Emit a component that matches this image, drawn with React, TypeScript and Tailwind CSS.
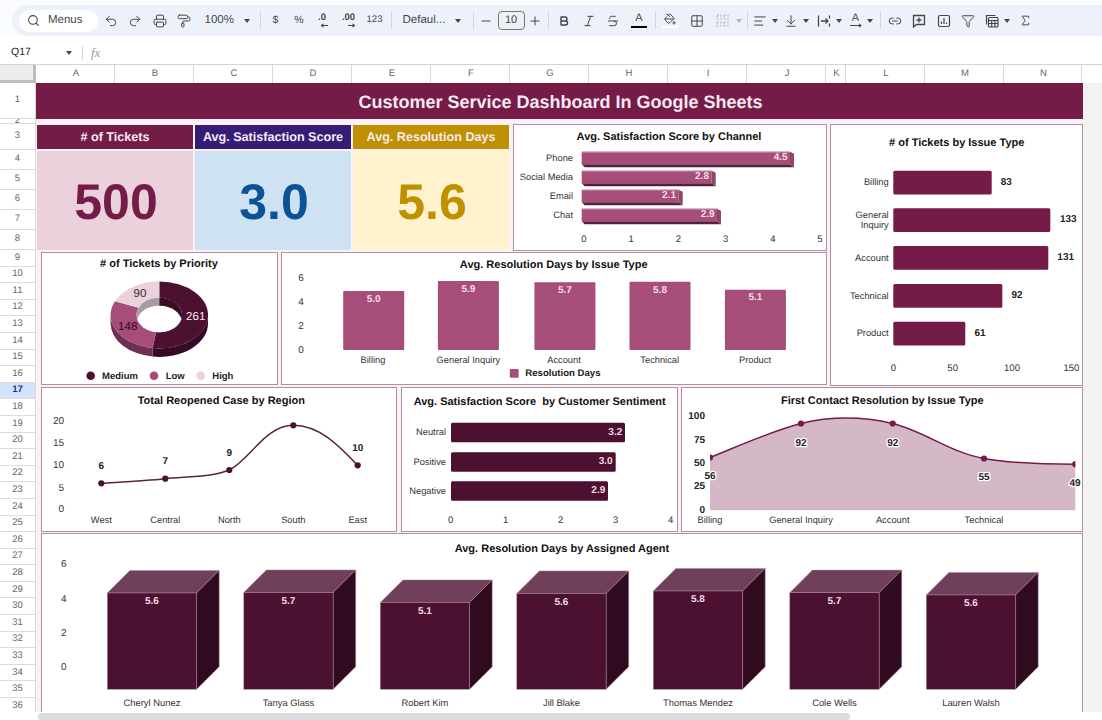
import type { ReactNode } from 'react';
import {
  AlignLeft,
  ArrowDownToLine,
  Bold,
  Filter,
  Grid2x2,
  Italic,
  Link2,
  Minus,
  PaintBucket,
  PaintRoller,
  Plus,
  Printer,
  Redo2,
  Search,
  Sigma,
  Strikethrough,
  Undo2,
} from 'lucide-react';

const PLUM = '#741b47';
const DARK = '#4c1130';
const MAUVE = '#a64d79';
const PALE = '#ead1dc';

const COLUMNS = [
  { name: 'A', cls: 'w-[79px]' },
  { name: 'B', cls: 'w-[79px]' },
  { name: 'C', cls: 'w-[79px]' },
  { name: 'D', cls: 'w-[79px]' },
  { name: 'E', cls: 'w-[79px]' },
  { name: 'F', cls: 'w-[79px]' },
  { name: 'G', cls: 'w-[79px]' },
  { name: 'H', cls: 'w-[79px]' },
  { name: 'I', cls: 'w-[79px]' },
  { name: 'J', cls: 'w-[79px]' },
  { name: 'K', cls: 'w-[20px]' },
  { name: 'L', cls: 'w-[79px]' },
  { name: 'M', cls: 'w-[79px]' },
  { name: 'N', cls: 'w-[78px]' },
];

const ROW_NUMBERS = Array.from({ length: 28 }, (_, i) => i + 9);

function Cell({ className, children }: { className: string; children?: ReactNode }) {
  return <div className={`flex shrink-0 items-center justify-center ${className}`}>{children}</div>;
}

function Caret({ className = '' }: { className?: string }) {
  return (
    <Cell className={`w-2 ${className}`}>
      <span className="block h-0 w-0 border-x-[3.5px] border-t-[4px] border-x-transparent border-t-[#444746]" />
    </Cell>
  );
}

function Divider({ className }: { className: string }) {
  return <div className={`h-[17px] w-px shrink-0 bg-[#d3d6da] ${className}`} />;
}

function DecimalIcon({ label, more }: { label: string; more?: boolean }) {
  return (
    <div className="flex h-[16px] flex-col items-center">
      <span className="text-[9.5px] font-bold leading-[10px] text-[#444746]">{label}</span>
      <svg width="9" height="5" viewBox="0 0 9 5" className="ml-[5px]" fill="none" stroke="#444746" strokeWidth="1.1">
        {more ? <path d="M1 2.5h6.5M5.5 .8l2 1.7-2 1.7" /> : <path d="M8 2.5H1.5M3.5 .8l-2 1.7 2 1.7" />}
      </svg>
    </div>
  );
}

function Toolbar() {
  const ic = { size: 14, strokeWidth: 1.7, color: '#444746' };
  return (
    <div className="h-9 shrink-0 bg-[#f9fbfd] pt-[5px]">
      <div className="ml-3 flex h-[31px] items-center rounded-l-[16px] bg-[#edf2fa] pl-[7px] text-[11.5px] text-[#444746]">
        <div className="flex h-[22px] w-[79px] shrink-0 items-center gap-[8px] rounded-full bg-white pl-[8px]">
          <Search size={13} strokeWidth={2} color="#444746" />
          <span>Menus</span>
        </div>
        <Cell className="ml-px w-6"><Undo2 {...ic} /></Cell>
        <Cell className="w-6"><Redo2 {...ic} /></Cell>
        <Cell className="ml-px w-6"><Printer {...ic} /></Cell>
        <Cell className="w-[23px]"><PaintRoller {...ic} /></Cell>
        <span className="ml-[9.5px] w-[29px] shrink-0">100%</span>
        <Caret className="ml-[9px]" />
        <Divider className="ml-[9px]" />
        <Cell className="ml-[3px] w-6 text-[10.5px]">$</Cell>
        <Cell className="w-[23px] text-[10.5px]">%</Cell>
        <Cell className="w-[23px]"><DecimalIcon label=".0" /></Cell>
        <Cell className="w-[30px]"><DecimalIcon label=".00" more /></Cell>
        <Cell className="w-[22px] text-[9.5px]">123</Cell>
        <Divider className="ml-[5px]" />
        <span className="ml-[11px] w-[41px] shrink-0 whitespace-nowrap">Defaul...</span>
        <Caret className="ml-[10px]" />
        <Divider className="ml-[11px]" />
        <Cell className="ml-[2px] w-5"><Minus {...ic} /></Cell>
        <Cell className="ml-[2px] h-[19px] w-[27px] rounded-[4px] border border-[#747775] text-[11px]">10</Cell>
        <Cell className="w-5"><Plus {...ic} /></Cell>
        <Divider className="ml-[3px]" />
        <Cell className="ml-[3px] w-6"><Bold size={12} strokeWidth={2.8} color="#444746" /></Cell>
        <Cell className="w-[26px]"><Italic {...ic} /></Cell>
        <Cell className="w-[23px]"><Strikethrough {...ic} /></Cell>
        <Cell className="ml-[2px] w-[25px]">
          <div className="flex w-[16px] flex-col items-center">
            <span className="text-[11px] leading-[11px]">A</span>
            <span className="mt-[2px] h-[2.5px] w-[16px] bg-black" />
          </div>
        </Cell>
        <Divider className="ml-[3px]" />
        <Cell className="ml-[2px] w-6">
          <div className="flex w-[16px] flex-col items-center">
            <PaintBucket size={12} strokeWidth={2} color="#444746" />
            <span className="mt-px h-[2.5px] w-[16px] bg-white" />
          </div>
        </Cell>
        <Cell className="ml-[3px] w-6"><Grid2x2 {...ic} /></Cell>
        <Cell className="ml-[2px] w-6">
          <svg width="13" height="13" viewBox="0 0 13 13" fill="none" stroke="#b4b8bd" strokeWidth="1.2" strokeDasharray="2 1.4">
            <rect x="1" y="1" width="4" height="4" />
            <rect x="8" y="1" width="4" height="4" />
            <rect x="1" y="8" width="4" height="4" />
            <rect x="8" y="8" width="4" height="4" />
          </svg>
        </Cell>
        <Cell className="w-2">
          <span className="block h-0 w-0 border-x-[3.5px] border-t-[4px] border-x-transparent border-t-[#b4b8bd]" />
        </Cell>
        <Divider className="ml-[4px]" />
        <Cell className="ml-[2px] w-[21px]"><AlignLeft {...ic} /></Cell>
        <Caret />
        <Cell className="ml-[2px] w-[21px]"><ArrowDownToLine {...ic} /></Cell>
        <Caret />
        <Cell className="ml-[4px] w-[21px]">
          <svg width="14" height="14" viewBox="0 0 14 14" fill="none" stroke="#444746" strokeWidth="1.3">
            <path d="M1.5 1.5v11M12.5 1.5v3M12.5 9.5v3M4 7h7M8.5 4.5L11 7l-2.5 2.5" />
          </svg>
        </Cell>
        <Caret />
        <Cell className="ml-[3px] w-5">
          <div className="flex flex-col items-center">
            <span className="text-[11px] leading-[10px]">A</span>
            <svg width="14" height="5" viewBox="0 0 14 5" fill="none" stroke="#444746" strokeWidth="1.1">
              <path d="M1 2.5h11M10 .8l2 1.7-2 1.7" />
            </svg>
          </div>
        </Cell>
        <Caret />
        <Divider className="ml-[6px]" />
        <Cell className="ml-[2px] w-6"><Link2 {...ic} /></Cell>
        <Cell className="w-6">
          <svg width="14" height="14" viewBox="0 0 14 14" fill="none" stroke="#444746" strokeWidth="1.3">
            <path d="M1.5 1.5h11v9H4.5l-3 2.5zM7 3.5v5M4.5 6h5" />
          </svg>
        </Cell>
        <Cell className="ml-px w-6">
          <svg width="14" height="14" viewBox="0 0 14 14" fill="none" stroke="#444746" strokeWidth="1.2">
            <rect x="1.5" y="1.5" width="11" height="11" rx="1.5" />
            <path d="M4.5 10V7.5M7 10V4M9.5 10V8.5" />
          </svg>
        </Cell>
        <Cell className="w-6"><Filter {...ic} /></Cell>
        <Cell className="ml-px w-[22px]">
          <svg width="14" height="14" viewBox="0 0 14 14" fill="none" stroke="#444746" strokeWidth="1.2">
            <path d="M1.5 10.5V1.5h9" />
            <rect x="3.5" y="3.5" width="9.5" height="9.5" rx="1" />
            <path d="M3.5 6.5h9.5M3.5 9.5h9.5M6.7 6.5V13M9.9 6.5V13" />
          </svg>
        </Cell>
        <Caret />
        <Cell className="ml-[3px] w-6"><Sigma size={13} strokeWidth={1.8} color="#444746" /></Cell>
      </div>
    </div>
  );
}

function FormulaBar() {
  return (
    <div className="flex h-[29px] shrink-0 items-center border-b border-[#d3d3d3] bg-white pt-[6px]">
      <span className="ml-[11px] w-[54px] text-[10.5px] text-[#222]">Q17</span>
      <Caret />
      <div className="ml-[9px] h-[14px] w-px bg-[#d3d6da]" />
      <span className="ml-[8px] font-['Liberation_Serif',serif] text-[13px] italic text-[#9a9a9a]">fx</span>
    </div>
  );
}

function ColumnHeader() {
  return (
    <div className="flex h-[18px] shrink-0 bg-white text-[9.5px] text-[#666]">
      <div className="w-[36px] shrink-0 border-b-[3px] border-r-[3px] border-[#bdbdbd] bg-[#ececec]" />
      {COLUMNS.map((c) => (
        <div key={c.name} className={`flex shrink-0 items-center justify-center border-r border-[#d9d9d9] pl-[2px] ${c.cls}`}>
          {c.name}
        </div>
      ))}
    </div>
  );
}

function RowLabel({ n, className }: { n: number; className: string }) {
  return (
    <div className={`flex shrink-0 items-center justify-center overflow-hidden border-b border-[#dcdcdc] ${className}`}>
      {n}
    </div>
  );
}

function RowHeader() {
  return (
    <div className="flex w-[36px] shrink-0 flex-col overflow-hidden border-r border-[#d9d9d9] bg-white text-[9.5px] text-[#666]">
      <RowLabel n={1} className="h-9" />
      <RowLabel n={2} className="h-[5px]" />
      <RowLabel n={3} className="h-[26px]" />
      {[4, 5, 6, 7, 8].map((n) => (
        <RowLabel key={n} n={n} className="h-5" />
      ))}
      {ROW_NUMBERS.map((n) =>
        n === 17 ? (
          <RowLabel key={n} n={n} className="h-[16.6px] bg-[#d3e3fd] font-bold text-[#0b3d8f]" />
        ) : (
          <RowLabel key={n} n={n} className="h-[16.6px]" />
        ),
      )}
    </div>
  );
}

type TextProps = {
  x: number;
  y: number;
  children: ReactNode;
  anchor?: 'start' | 'middle' | 'end';
  bold?: boolean;
  size?: number;
  fill?: string;
  halo?: boolean;
};

function T({ x, y, children, anchor = 'middle', bold, size = 9.3, fill = '#333333', halo }: TextProps) {
  return (
    <text
      x={x}
      y={y + 0.5}
      textAnchor={anchor}
      dominantBaseline="central"
      fontSize={size}
      fontWeight={bold ? 700 : 400}
      fill={fill}
      stroke={halo ? '#ffffff' : undefined}
      strokeWidth={halo ? 2.5 : undefined}
      paintOrder={halo ? 'stroke' : undefined}
      className="whitespace-pre"
    >
      {children}
    </text>
  );
}

function Title({ x, y, children }: { x: number; y: number; children: ReactNode }) {
  return (
    <T x={x} y={y} bold size={11} fill="#111111">
      {children}
    </T>
  );
}

// svg coordinates are page pixels, so every chart reads straight off the screenshot
function Panel({ className, box, children }: { className: string; box: string; children: ReactNode }) {
  return (
    <div className={`shrink-0 overflow-hidden border border-[#b28ea5] bg-white ${className}`}>
      <svg viewBox={box} className="block h-full w-full">
        {children}
      </svg>
    </div>
  );
}

function Kpi({ title, value, head, body, text }: { title: string; value: string; head: string; body: string; text: string }) {
  return (
    <div className="flex w-[156px] shrink-0 flex-col gap-[2px]">
      <div className={`flex h-[24px] items-center justify-center whitespace-nowrap text-[12.6px] font-bold text-[#f6eaf0] ${head}`}>
        {title}
      </div>
      <div className={`flex h-[99px] items-center justify-center pl-[2px] pt-[3px] text-[50px] font-bold ${body} ${text}`}>{value}</div>
    </div>
  );
}

function ChannelChart() {
  const bars = [
    { name: 'Phone', value: '4.5', top: 151.7, right: 794, lx: 780.7 },
    { name: 'Social Media', value: '2.8', top: 170.7, right: 715.7, lx: 702 },
    { name: 'Email', value: '2.1', top: 189.7, right: 682.7, lx: 669 },
    { name: 'Chat', value: '2.9', top: 208.7, right: 721, lx: 707.7 },
  ];
  const x0 = 581.7;
  return (
    <Panel className="ml-1 w-[314px]" box="514 125 312 125">
      <Title x={669} y={136.5}>Avg. Satisfaction Score by Channel</Title>
      {bars.map((b) => {
        const bottom = b.top + 15.6;
        return (
          <g key={b.name}>
            <T x={573} y={b.top + 6} anchor="end">{b.name}</T>
            <polygon points={`${x0},${bottom - 3} ${b.right - 4},${bottom - 3} ${b.right},${bottom} ${x0 + 3},${bottom}`} fill="#55203c" />
            <polygon points={`${b.right - 4},${b.top} ${b.right},${b.top + 2} ${b.right},${bottom} ${b.right - 4},${bottom - 3}`} fill="#8b4668" />
            <rect x={x0} y={b.top} width={b.right - 4 - x0} height={12.6} fill={MAUVE} />
            <rect x={x0} y={b.top} width={b.right - 4 - x0} height={0.9} fill="#c994af" />
            <T x={b.lx} y={b.top + 5} bold size={10} fill="#f6dfe9">{b.value}</T>
          </g>
        );
      })}
      {['0', '1', '2', '3', '4', '5'].map((l, i) => (
        <T key={l} x={584 + i * 47.2} y={238.7} size={9.5}>{l}</T>
      ))}
    </Panel>
  );
}

function IssueTicketsChart() {
  const bars = [
    { name: ['Billing'], value: '83', top: 170.7, right: 991.7, lx: 1006.3 },
    { name: ['General', 'Inquiry'], value: '133', top: 208.3, right: 1050.3, lx: 1068.3 },
    { name: ['Account'], value: '131', top: 246, right: 1048.3, lx: 1065.7 },
    { name: ['Technical'], value: '92', top: 284, right: 1002.3, lx: 1017 },
    { name: ['Product'], value: '61', top: 321.7, right: 965.3, lx: 980 },
  ];
  return (
    <Panel className="ml-[2px] w-[253px]" box="831 125 251 260">
      <Title x={956.7} y={142}>
        # of Tickets by Issue Type
      </Title>
      {bars.map((b) => (
        <g key={b.value}>
          {b.name.length === 1 ? (
            <T x={888.7} y={b.top + 11} anchor="end">{b.name[0]}</T>
          ) : (
            <>
              <T x={888.7} y={b.top + 6.4} anchor="end">{b.name[0]}</T>
              <T x={888.7} y={b.top + 15.7} anchor="end">{b.name[1]}</T>
            </>
          )}
          <rect x={893.3} y={b.top} width={b.right - 893.3} height={23.8} rx={1.5} fill={PLUM} />
          <T x={b.lx} y={b.top + 11} bold size={10} fill="#222222">{b.value}</T>
        </g>
      ))}
      {['0', '50', '100', '150'].map((l, i) => (
        <T key={l} x={893.3 + i * 59.35} y={368} size={9.5}>{l}</T>
      ))}
    </Panel>
  );
}

const CX = 159.3;
const CY = 315;
const RX = 48.7;
const RY = 33.4;
const IRX = 22.8;
const IRY = 17.2;
const DEPTH = 8.5;

function at(rx: number, ry: number, deg: number, dy = 0) {
  const r = (deg * Math.PI) / 180;
  return `${(CX + rx * Math.cos(r)).toFixed(2)} ${(CY + dy + ry * Math.sin(r)).toFixed(2)}`;
}

function sector(a: number, b: number) {
  const large = b - a > 180 ? 1 : 0;
  return `M${at(RX, RY, a)} A${RX} ${RY} 0 ${large} 1 ${at(RX, RY, b)} L${at(IRX, IRY, b)} A${IRX} ${IRY} 0 ${large} 0 ${at(IRX, IRY, a)} Z`;
}

function wall(a: number, b: number) {
  return `M${at(RX, RY, a)} A${RX} ${RY} 0 0 1 ${at(RX, RY, b)} L${at(RX, RY, b, DEPTH)} A${RX} ${RY} 0 0 0 ${at(RX, RY, a, DEPTH)} Z`;
}

function PriorityChart() {
  const legend = [
    { name: 'Medium', dot: 90.7, text: 102, color: DARK },
    { name: 'Low', dot: 154, text: 165.7, color: MAUVE },
    { name: 'High', dot: 200.7, text: 212.3, color: PALE },
  ];
  return (
    <Panel className="w-[237px]" box="42 253 235 131">
      <Title x={159} y={263}>
        # of Tickets by Priority
      </Title>
      <path d={wall(0, 97.9)} fill="#350a22" />
      <path d={wall(97.9, 180)} fill="#6d3051" />
      <path d={sector(-90, 97.9)} fill={DARK} />
      <path d={sector(97.9, 204.5)} fill={MAUVE} />
      <path d={sector(204.5, 270)} fill={PALE} />
      <clipPath id="hole">
        <ellipse cx={CX} cy={CY} rx={IRX} ry={IRY} />
      </clipPath>
      <g clipPath="url(#hole)">
        <rect x={CX - IRX} y={CY - IRY} width={IRX} height={IRY * 2} fill="#a99da3" />
        <rect x={CX} y={CY - IRY} width={IRX} height={IRY * 2} fill="#3a0d25" />
        <ellipse cx={CX} cy={CY + 8} rx={IRX} ry={IRY} fill="#ffffff" />
      </g>
      <T x={195.7} y={316.7} size={11.5} fill="#f8eef3">261</T>
      <T x={127.7} y={326.7} size={11.5} fill="#2d0a1c">148</T>
      <T x={140} y={293.3} size={11.5} fill="#3b2a33">90</T>
      {legend.map((l) => (
        <g key={l.name}>
          <circle cx={l.dot} cy={375.7} r={4.3} fill={l.color} />
          <T x={l.text} y={375.7} anchor="start" bold size={9.5} fill="#222222">{l.name}</T>
        </g>
      ))}
    </Panel>
  );
}

function ResolutionChart() {
  const bars = [
    { name: 'Billing', value: '5.0', x: 343.2, top: 291, ly: 298.7, nx: 373 },
    { name: 'General Inquiry', value: '5.9', x: 437.9, top: 281, ly: 289, nx: 468.4 },
    { name: 'Account', value: '5.7', x: 534.4, top: 282.3, ly: 290.3, nx: 564 },
    { name: 'Technical', value: '5.8', x: 629.5, top: 281.7, ly: 289.7, nx: 659.7 },
    { name: 'Product', value: '5.1', x: 724.9, top: 289.7, ly: 297.3, nx: 755 },
  ];
  return (
    <Panel className="ml-[3px] w-[546px]" box="282 253 544 131">
      <Title x={553.7} y={264.3}>Avg. Resolution Days by Issue Type</Title>
      {[['6', 278.3], ['4', 302.3], ['2', 326], ['0', 350]].map(([l, y]) => (
        <T key={l} x={301} y={y as number} size={10}>{l}</T>
      ))}
      {bars.map((b) => (
        <g key={b.name}>
          <rect x={b.x} y={b.top} width={61} height={350 - b.top} rx={1} fill={MAUVE} />
          <T x={b.x + 30.5} y={b.ly} bold size={10} fill="#f6dfe9">{b.value}</T>
          <T x={b.nx} y={359.3}>{b.name}</T>
        </g>
      ))}
      <rect x={509.8} y={369} width={8.8} height={8.7} rx={0.8} fill={MAUVE} />
      <T x={525.3} y={373} anchor="start" bold size={9.6} fill="#222222">Resolution Days</T>
    </Panel>
  );
}

function ReopenedChart() {
  const points = [
    { name: 'West', x: 101.3, y: 482.3, v: '6', ly: 465 },
    { name: 'Central', x: 165.3, y: 477.7, v: '7', ly: 460.3 },
    { name: 'North', x: 229.3, y: 469, v: '9', ly: 451.7 },
    { name: 'South', x: 293.3, y: 424.3 },
    { name: 'East', x: 357.7, y: 464.3, v: '10', ly: 447 },
  ];
  return (
    <Panel className="w-[356px]" box="42 387 354 143">
      <Title x={221.3} y={399}>Total Reopened Case by Region</Title>
      {[['20', 419.7], ['15', 442], ['10', 464.3], ['5', 486.7], ['0', 508.3]].map(([l, y]) => (
        <T key={l} x={64} y={y as number} anchor="end" size={10}>{l}</T>
      ))}
      <path
        d="M101.3 482.3C122 481 144 480 165.3 477.7C187 475.5 213 476 229.3 469C250 459 265 424.3 293.3 424.3C320 424.3 340 446 357.7 464.3"
        fill="none"
        stroke="#5a2343"
        strokeWidth={1.5}
      />
      {points.map((p) => (
        <g key={p.name}>
          <circle cx={p.x} cy={p.y} r={3.1} fill={DARK} />
          {p.v && <T x={p.x} y={p.ly!} bold size={10} fill="#222222">{p.v}</T>}
          <T x={p.x} y={518}>{p.name}</T>
        </g>
      ))}
    </Panel>
  );
}

function SentimentChart() {
  const bars = [
    { name: 'Neutral', value: '3.2', top: 421.7, right: 625, lx: 615.3 },
    { name: 'Positive', value: '3.0', top: 451.3, right: 615.7, lx: 605.7 },
    { name: 'Negative', value: '2.9', top: 480.3, right: 608, lx: 598.3 },
  ];
  return (
    <Panel className="ml-1 w-[277px]" box="402 387 275 143">
      <Title x={539.7} y={400.3}>Avg. Satisfaction Score  by Customer Sentiment</Title>
      {bars.map((b) => (
        <g key={b.name}>
          <T x={446} y={b.top + 9} anchor="end">{b.name}</T>
          <rect x={451} y={b.top} width={b.right - 451} height={19.5} rx={1.5} fill={DARK} />
          <T x={b.lx} y={b.top + 9} bold size={10} fill="#f3dde8">{b.value}</T>
        </g>
      ))}
      {['0', '1', '2', '3', '4'].map((l, i) => (
        <T key={l} x={450.7 + i * 54.97} y={518.7} size={9.5}>{l}</T>
      ))}
    </Panel>
  );
}

function ContactChart() {
  const line = 'M710 457C740 445 770 431 801 423C830 416 862 416 892.7 423C925 431 950 452 984 458C1012 463 1044 463.7 1075.3 463.7';
  const points = [
    { name: 'Billing', x: 710, y: 457, v: '56', ly: 475 },
    { name: 'General Inquiry', x: 801, y: 423, v: '92', ly: 442 },
    { name: 'Account', x: 892.7, y: 423, v: '92', ly: 442 },
    { name: 'Technical', x: 984, y: 458, v: '55', ly: 476.7 },
  ];
  return (
    <Panel className="ml-[3px] w-[402px]" box="682 388 400 142">
      <Title x={882.3} y={400.3}>First Contact Resolution by Issue Type</Title>
      {[['100', 415.3], ['75', 439], ['50', 462.3], ['25', 485.3], ['0', 509]].map(([l, y]) => (
        <T key={l} x={705} y={y as number} anchor="end" bold size={10} fill="#222222">{l}</T>
      ))}
      <path d={`${line}L1075.3 509.7L710 509.7Z`} fill="#d5b8c8" />
      <path d={line} fill="none" stroke={PLUM} strokeWidth={1.5} />
      <clipPath id="area">
        <rect x={710} y={410} width={365.3} height={100} />
      </clipPath>
      <g clipPath="url(#area)">
        <circle cx={710} cy={457} r={3.1} fill={PLUM} />
        <circle cx={1075.3} cy={463.7} r={3.1} fill={PLUM} />
      </g>
      {points.map((p) => (
        <g key={p.name}>
          {p.name !== 'Billing' && <circle cx={p.x} cy={p.y} r={3.1} fill={PLUM} />}
          <T x={p.x} y={p.ly} bold size={10} fill="#222222" halo>{p.v}</T>
          <T x={p.x} y={519}>{p.name}</T>
        </g>
      ))}
      <T x={1075} y={482} bold size={10} fill="#222222" halo>49</T>
    </Panel>
  );
}

function AgentChart() {
  const cubes = [
    { name: 'Cheryl Nunez', value: '5.6', x: 107.3, top: 592 },
    { name: 'Tanya Glass', value: '5.7', x: 243.8, top: 591.5 },
    { name: 'Robert Kim', value: '5.1', x: 380.3, top: 601.5 },
    { name: 'Jill Blake', value: '5.6', x: 516.8, top: 592.5 },
    { name: 'Thomas Mendez', value: '5.8', x: 653.3, top: 590 },
    { name: 'Cole Wells', value: '5.7', x: 789.8, top: 591.7 },
    { name: 'Lauren Walsh', value: '5.6', x: 926.3, top: 594 },
  ];
  const w = 89.3;
  const d = 22.6;
  const bottom = 688.3;
  return (
    <Panel className="h-[190px] w-[1042px]" box="42 533 1040 188">
      <Title x={562} y={547}>Avg. Resolution Days by Assigned Agent</Title>
      {[['6', 562.7], ['4', 597.7], ['2', 631.7], ['0', 665.7]].map(([l, y]) => (
        <T key={l} x={63.7} y={y as number} size={10}>{l}</T>
      ))}
      {cubes.map((c) => (
        <g key={c.name} stroke="#a98aa0" strokeWidth={0.5}>
          <polygon
            points={`${c.x},${c.top} ${c.x + d},${c.top - d} ${c.x + w + d},${c.top - d} ${c.x + w},${c.top}`}
            fill="#70405b"
          />
          <polygon
            points={`${c.x + w},${c.top} ${c.x + w + d},${c.top - d} ${c.x + w + d},${bottom - d} ${c.x + w},${bottom}`}
            fill="#300a1f"
          />
          <rect x={c.x} y={c.top} width={w} height={bottom - c.top} fill={DARK} />
          <g stroke="none">
            <T x={c.x + w / 2} y={c.top + 8} bold size={10} fill="#f3dde8">{c.value}</T>
            <T x={c.x + w / 2} y={701.3} size={9.4}>{c.name}</T>
          </g>
        </g>
      ))}
    </Panel>
  );
}

export default function App() {
  return (
    <div className="flex h-[720px] w-[1102px] flex-col overflow-hidden bg-white font-['Liberation_Sans',Arial,sans-serif] [text-rendering:geometricPrecision]">
      <Toolbar />
      <FormulaBar />
      <ColumnHeader />
      <div className="flex h-[629px] shrink-0 overflow-hidden">
        <RowHeader />
        <div className="w-[1047px] shrink-0 overflow-hidden bg-[#fbf2f7]">
          <div className="flex h-9 items-center justify-center bg-[#741b47] pl-[2px] pt-[2px] text-[18px] font-bold text-[#f7e9f0]">
            Customer Service Dashboard In Google Sheets
          </div>
          <div className="mt-[5px] flex h-[262px]">
            <div className="w-[792px] shrink-0">
              <div className="flex h-[127px] pl-px">
                <div className="flex w-[472px] shrink-0 justify-between pt-px">
                  <Kpi title="# of Tickets" value="500" head="bg-[#741b47]" body="bg-[#ead1dc]" text="text-[#741b47]" />
                  <Kpi title="Avg. Satisfaction Score" value="3.0" head="bg-[#351c75]" body="bg-[#cfe2f3]" text="text-[#0b5394]" />
                  <Kpi title="Avg. Resolution Days" value="5.6" head="bg-[#bf9000]" body="bg-[#fff2cc]" text="text-[#bf9000]" />
                </div>
                <ChannelChart />
              </div>
              <div className="mt-px flex h-[133px] pl-[5px]">
                <PriorityChart />
                <ResolutionChart />
              </div>
            </div>
            <IssueTicketsChart />
          </div>
          <div className="mt-px flex h-[145px] pl-[5px]">
            <ReopenedChart />
            <SentimentChart />
            <ContactChart />
          </div>
          <div className="mt-px pl-[5px]">
            <AgentChart />
          </div>
        </div>
        <div className="flex-1 bg-[#f3f3f3]" />
      </div>
      <div className="flex-1 bg-white pl-[38px] pt-px">
        <div className="h-[7px] w-[812px] rounded-full bg-[#dadce0]" />
      </div>
    </div>
  );
}
